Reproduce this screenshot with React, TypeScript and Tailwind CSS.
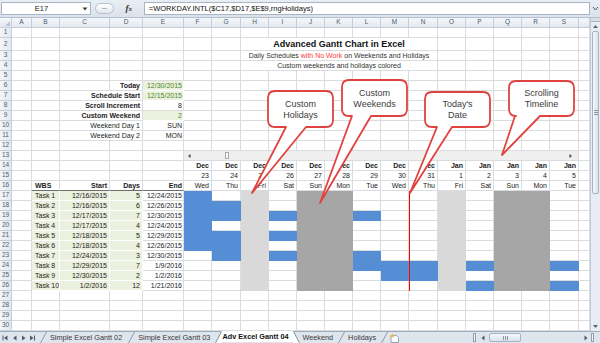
import React from "react";

type G = { c: string; m: string; d: string; w: string; t: "" | "hol" | "wk" };

const W: Record<string, string> = {
  A: "w-[20px]",
  B: "w-[28px]",
  C: "w-[50px]",
  D: "w-[33px]",
  E: "w-[41px]",
  F: "w-[28px]",
  G: "w-[29px]",
  H: "w-[28px]",
  I: "w-[28px]",
  J: "w-[28px]",
  K: "w-[28px]",
  L: "w-[28px]",
  M: "w-[28px]",
  N: "w-[29px]",
  O: "w-[28px]",
  P: "w-[28px]",
  Q: "w-[28px]",
  R: "w-[28px]",
  S: "w-[29px]",
  T: "w-[11px]",
};
const LETTERS = Object.keys(W);

const GANTT: G[] = [
  { c: "F", m: "Dec", d: "23", w: "Wed", t: "" },
  { c: "G", m: "Dec", d: "24", w: "Thu", t: "" },
  { c: "H", m: "Dec", d: "25", w: "Fri", t: "hol" },
  { c: "I", m: "Dec", d: "26", w: "Sat", t: "" },
  { c: "J", m: "Dec", d: "27", w: "Sun", t: "wk" },
  { c: "K", m: "Dec", d: "28", w: "Mon", t: "wk" },
  { c: "L", m: "Dec", d: "29", w: "Tue", t: "" },
  { c: "M", m: "Dec", d: "30", w: "Wed", t: "" },
  { c: "N", m: "Dec", d: "31", w: "Thu", t: "" },
  { c: "O", m: "Jan", d: "1", w: "Fri", t: "hol" },
  { c: "P", m: "Jan", d: "2", w: "Sat", t: "" },
  { c: "Q", m: "Jan", d: "3", w: "Sun", t: "wk" },
  { c: "R", m: "Jan", d: "4", w: "Mon", t: "wk" },
  { c: "S", m: "Jan", d: "5", w: "Tue", t: "" },
  { c: "T", m: "", d: "", w: "", t: "" },
];
const gByCol: Record<string, G> = Object.fromEntries(GANTT.map((g) => [g.c, g]));

const TASKS = [
  ["Task 1", "12/16/2015", "5", "12/24/2015"],
  ["Task 2", "12/16/2015", "6", "12/26/2015"],
  ["Task 3", "12/17/2015", "7", "12/30/2015"],
  ["Task 4", "12/17/2015", "4", "12/24/2015"],
  ["Task 5", "12/18/2015", "5", "12/29/2015"],
  ["Task 6", "12/18/2015", "4", "12/26/2015"],
  ["Task 7", "12/24/2015", "3", "12/30/2015"],
  ["Task 8", "12/29/2015", "7", "1/9/2016"],
  ["Task 9", "12/30/2015", "2", "1/2/2016"],
  ["Task 10", "1/2/2016", "12", "1/21/2016"],
];

// which timeline columns are blue for each task row
const BARS: Record<number, string[]> = {
  17: ["F"],
  18: ["F", "G"],
  19: ["F", "G", "I", "L"],
  20: ["F"],
  21: ["F", "G", "I"],
  22: ["F", "G"],
  23: ["G", "I", "L"],
  24: ["L", "M", "N", "P", "S"],
  25: ["M", "N"],
  26: ["P", "S"],
};

const PARAMS: Record<number, { label: string; value: string; bold: boolean; green: boolean }> = {
  6: { label: "Today", value: "12/30/2015", bold: true, green: true },
  7: { label: "Schedule Start", value: "12/15/2015", bold: true, green: true },
  8: { label: "Scroll Increment", value: "8", bold: true, green: false },
  9: { label: "Custom Weekend", value: "2", bold: true, green: true },
  10: { label: "Weekend Day 1", value: "SUN", bold: false, green: false },
  11: { label: "Weekend Day 2", value: "MON", bold: false, green: false },
};

const GRID = "border-[#dadcdd]";
const GREEN = "bg-[#ebf1de] border-white";

const TITLE: Record<number, React.ReactNode> = {
  2: <span className="font-bold text-[9px] text-[#111]">Advanced Gantt Chart in Excel</span>,
  3: (
    <span className="text-[#333]">
      Daily Schedules <span className="text-[#ff3b3b]">with No Work</span> on Weekends and Holidays
    </span>
  ),
  4: <span className="text-[#333]">Custom weekends and holidays colored</span>,
};

type Spec = { w?: string; cls?: string; content?: React.ReactNode } | null;

function TimelineScroll() {
  return (
    <div className="w-full h-full flex items-center bg-[#efefef]">
      <svg width="7" height="6" className="ml-[2px]">
        <path d="M4.5 1 L2 3 L4.5 5Z" fill="#444" />
      </svg>
      <div className="ml-[32px] w-[4px] h-[7px] bg-[#fbfbfb] border border-[#a9a9a9]" />
      <div className="flex-1" />
      <svg width="7" height="6" className="mr-[4px]">
        <path d="M2.5 1 L5 3 L2.5 5Z" fill="#444" />
      </svg>
    </div>
  );
}

function cellSpec(r: number, c: string): Spec {
  if (r >= 2 && r <= 4) {
    if (["I", "J", "K", "L", "M", "N"].includes(c)) return null;
    if (c === "H") return { w: "w-[197px]", cls: `${GRID} justify-center`, content: TITLE[r] };
  }
  if (r >= 6 && r <= 11) {
    const p = PARAMS[r];
    if (r >= 7 && c === "D") return null;
    if ((r >= 7 && c === "C") || (r === 6 && c === "D"))
      return {
        w: r >= 7 ? "w-[83px]" : undefined,
        cls: `${GRID} justify-end pr-[2px] ${p.bold ? "font-bold" : ""}`,
        content: p.label,
      };
    if (c === "E")
      return {
        cls: `justify-end pr-[1px] ${p.green ? `${GREEN} text-[#4e8a2e]` : GRID}`,
        content: p.value,
      };
  }
  if (r === 13) {
    if (["G", "H", "I", "J", "K", "L", "M", "N", "O", "P", "Q", "R", "S"].includes(c)) return null;
    if (c === "F") return { w: "w-[395px]", cls: GRID, content: <TimelineScroll /> };
  }
  const g = gByCol[c];
  if (g && r >= 14 && r <= 16) {
    const txt = r === 14 ? g.m : r === 15 ? g.d : g.w;
    return { cls: `${GRID} justify-end pr-[2px] ${r === 14 ? "font-bold" : ""}`, content: txt };
  }
  if (r === 16) {
    const line = "border-r-[#dadcdd] border-b-[#6f6f6f] font-bold";
    if (c === "B") return { cls: `${line} pl-[3px]`, content: "WBS" };
    if (c === "C") return { cls: `${line} justify-end pr-[2px]`, content: "Start" };
    if (c === "D") return { cls: `${line} justify-end pr-[2px]`, content: "Days" };
    if (c === "E") return { cls: `${line} justify-end pr-[1px]`, content: "End" };
  }
  if (r >= 17 && r <= 26) {
    const t = TASKS[r - 17];
    if (c === "B") return { cls: `${GREEN} pl-[3px]`, content: t[0] };
    if (c === "C") return { cls: `${GREEN} justify-end pr-[2px]`, content: t[1] };
    if (c === "D") return { cls: `${GREEN} justify-end pr-[2px]`, content: t[2] };
    if (c === "E") return { cls: `${GRID} justify-end pr-[1px]`, content: t[3] };
    if (g) {
      if (g.t === "hol") return { cls: "bg-[#d9d9d9] border-[#d9d9d9]" };
      if (g.t === "wk") return { cls: "bg-[#a6a6a6] border-[#a6a6a6]" };
      if (BARS[r].includes(c)) return { cls: "bg-[#558ed5] border-[#558ed5]" };
    }
  }
  return { cls: GRID };
}

function Row({ r }: { r: number }) {
  const cells: React.ReactNode[] = [];
  for (const c of LETTERS) {
    const s = cellSpec(r, c);
    if (!s) continue;
    cells.push(
      <div
        key={c}
        className={`shrink-0 h-full flex items-center overflow-hidden whitespace-nowrap border-r border-b ${s.w ?? W[c]} ${s.cls ?? GRID}`}
      >
        {s.content}
      </div>
    );
  }
  return (
    <div className={`flex shrink-0 ${r === 2 ? "h-[13px]" : "h-[10px]"}`}>
      <div className="w-[12px] shrink-0 h-full flex items-center justify-center bg-linear-to-r from-[#f3f6f9] to-[#e4e9ef] border-r border-b border-[#c5cfdb] text-[6.5px] text-[#4f5f70]">
        {r}
      </div>
      {cells}
    </div>
  );
}

function HeaderRow() {
  return (
    <div className="flex h-[10px] shrink-0">
      <div className="w-[12px] shrink-0 h-full flex items-end justify-end pr-[1px] pb-[1px] bg-linear-to-b from-[#f5f7fa] to-[#e3e8ee] border-r border-b border-[#c5cfdb]">
        <svg width="5" height="5">
          <path d="M5 0 L5 5 L0 5Z" fill="#b9c4d1" />
        </svg>
      </div>
      {LETTERS.map((c) => (
        <div
          key={c}
          className={`${W[c]} shrink-0 h-full flex items-center justify-center bg-linear-to-b from-[#f5f7fa] to-[#e3e8ee] border-r border-b border-[#c5cfdb] text-[6.5px] text-[#4a5b6e]`}
        >
          {c === "T" ? "" : c}
        </div>
      ))}
    </div>
  );
}

function FormulaBar() {
  return (
    <div className="h-[18px] flex items-center bg-linear-to-b from-[#e9eef4] to-[#dbe2ea] border-b border-[#b3c0cf]">
      <div className="ml-[1px] w-[90px] h-[13px] bg-white border border-[#a7b5c6] flex items-center">
        <span className="flex-1 text-center text-[7.5px] text-[#222]">E17</span>
        <svg width="8" height="6" className="mr-[1px]">
          <path d="M1.5 1.5 L6.5 1.5 L4 4.5Z" fill="#3d3d3d" />
        </svg>
      </div>
      <div className="ml-[4px] w-[19px] h-[11px] rounded-full border border-[#b4c0cd] bg-linear-to-b from-white to-[#e2e8ef] flex items-center justify-center">
        <div className="w-[5px] h-px bg-[#aab6c3]" />
      </div>
      <div className="w-[30px] flex items-center justify-center">
        <span className="font-['Liberation_Serif',serif] italic font-bold text-[9px] text-[#333]">
          f<span className="text-[7px]">x</span>
        </span>
      </div>
      <div className="w-[447px] h-[13px] bg-white border border-[#a7b5c6] flex items-center pl-[4px] text-[7.5px] text-[#111] whitespace-nowrap overflow-hidden">
        =WORKDAY.INTL($C17,$D17,$E$9,rngHolidays)
      </div>
      <div className="w-[10px] h-[13px] flex items-center justify-center">
        <svg width="7" height="5">
          <path d="M1 1 L3.5 4 L6 1" stroke="#555" fill="none" />
        </svg>
      </div>
    </div>
  );
}

function VScroll() {
  return (
    <div className="w-[10px] shrink-0 h-full flex flex-col bg-[#e8edf3] border-l border-[#c3ccd7]">
      <div className="h-[4px] bg-[#d6dee8] border-b border-[#a8b6c6]" />
      <div className="h-[9px] flex items-center justify-center">
        <svg width="5" height="3">
          <path d="M0 3 L2.5 0 L5 3Z" fill="#56677a" />
        </svg>
      </div>
      <div className="mx-[1px] h-[163px] rounded-[2px] border border-[#a3b3c5] bg-linear-to-r from-[#f6f8fb] to-[#d9e1eb] flex flex-col items-center justify-center gap-px">
        <div className="w-[4px] h-px bg-[#8797a9]" />
        <div className="w-[4px] h-px bg-[#8797a9]" />
        <div className="w-[4px] h-px bg-[#8797a9]" />
      </div>
      <div className="flex-1" />
      <div className="h-[9px] flex items-center justify-center">
        <svg width="5" height="3">
          <path d="M0 0 L2.5 3 L5 0Z" fill="#56677a" />
        </svg>
      </div>
    </div>
  );
}

function Slash() {
  return (
    <svg width="7" height="11" className="shrink-0">
      <path d="M0.5 11 L6.5 0" stroke="#8c9aab" fill="none" />
    </svg>
  );
}

function Tab({ label, pr = "pr-[6px]" }: { label: string; pr?: string }) {
  return (
    <div className="flex items-center h-full shrink-0">
      <Slash />
      <span className={`pl-[3px] ${pr} whitespace-nowrap`}>{label}</span>
    </div>
  );
}

function TabBar() {
  return (
    <div className="h-[12px] flex bg-[#dfe5ed] border-t border-[#9dabbb] text-[7.3px] text-[#3a3a3a] leading-none">
      <div className="w-[40px] shrink-0 flex items-center">
        <svg width="40" height="8">
          <path d="M3 1.5 L3 6.5" stroke="#4d5c6d" />
          <path d="M7.5 1.5 L4 4 L7.5 6.5Z" fill="#4d5c6d" />
          <path d="M16.5 1.5 L13 4 L16.5 6.5Z" fill="#4d5c6d" />
          <path d="M22 1.5 L25.5 4 L22 6.5Z" fill="#4d5c6d" />
          <path d="M30 1.5 L33.5 4 L30 6.5Z" fill="#4d5c6d" />
          <path d="M34.5 1.5 L34.5 6.5" stroke="#4d5c6d" />
        </svg>
      </div>
      <Tab label="Simple Excel Gantt 02" />
      <Tab label="Simple Excel Gantt 03" pr="pr-[5px]" />
      <div className="flex items-stretch h-full shrink-0 -mt-px">
        <svg width="7" height="12" className="shrink-0">
          <path d="M0 12 L6.5 0 L7 0 L7 12Z" fill="#fff" />
          <path d="M0.5 12 L6.5 0.5" stroke="#7e8fa3" fill="none" />
        </svg>
        <span className="bg-white w-[71px] flex items-center font-bold text-[#111] whitespace-nowrap">
          Adv Excel Gantt 04
        </span>
        <svg width="7" height="12" className="shrink-0">
          <path d="M0 0 L0.5 0 L7 12 L0 12Z" fill="#fff" />
          <path d="M0.5 0.5 L6.5 12" stroke="#7e8fa3" fill="none" />
        </svg>
      </div>
      <span className="pl-[2px] pr-[5px] flex items-center whitespace-nowrap shrink-0">Weekend</span>
      <Tab label="Holidays" pr="pr-[5px]" />
      <div className="flex items-center h-full shrink-0">
        <Slash />
        <svg width="12" height="10" className="ml-[1px]">
          <path d="M2 2.5 L7.5 2.5 L9.5 4.5 L9.5 9.5 L2 9.5Z" fill="#fff" stroke="#8092a6" strokeWidth="0.8" />
          <path d="M3.5 0.5 L4.2 2 L5.8 2.2 L4.6 3.2 L5 4.8 L3.5 4 L2 4.8 L2.4 3.2 L1.2 2.2 L2.8 2Z" fill="#f2b233" />
        </svg>
      </div>
      <div className="flex-1" />
      <div className="w-[127px] shrink-0 flex items-center">
        <div className="w-[3px] h-[9px] border border-[#8e9db0] bg-[#f2f5f8]" />
        <svg width="8" height="6" className="ml-[3px]">
          <path d="M5.5 0.5 L2.5 3 L5.5 5.5Z" fill="#4d5c6d" />
        </svg>
        <div className="ml-[2px] w-[32px] h-[9px] rounded-[2px] border border-[#a3b3c5] bg-linear-to-b from-[#f6f8fb] to-[#d9e1eb] flex items-center justify-center gap-px">
          <div className="w-px h-[4px] bg-[#8797a9]" />
          <div className="w-px h-[4px] bg-[#8797a9]" />
          <div className="w-px h-[4px] bg-[#8797a9]" />
        </div>
        <div className="flex-1" />
        <svg width="8" height="6">
          <path d="M2.5 0.5 L5.5 3 L2.5 5.5Z" fill="#4d5c6d" />
        </svg>
        <div className="ml-[1px] mr-[6px] w-[3px] h-[9px] border border-[#8e9db0] bg-[#f2f5f8]" />
      </div>
    </div>
  );
}

const CALLOUTS = [
  { x1: 268, y1: 91, x2: 333, y2: 127, bl: 286, br: 306, tx: 252, ty: 193, l1: "Custom", l2: "Holidays" },
  { x1: 342, y1: 80, x2: 407, y2: 116, bl: 352, br: 371, tx: 320, ty: 203, l1: "Custom", l2: "Weekends" },
  { x1: 425, y1: 92, x2: 490, y2: 127, bl: 437, br: 452, tx: 410, ty: 193, l1: "Today's", l2: "Date" },
  { x1: 509, y1: 81, x2: 574, y2: 116, bl: 515, br: 540, tx: 502, ty: 155, l1: "Scrolling", l2: "Timeline" },
];

function Overlay() {
  const rr = 7;
  return (
    <svg width="600" height="343" className="absolute inset-0 pointer-events-none">
      <rect x="409" y="191" width="1" height="100" fill="#ff0000" shapeRendering="crispEdges" />
      {CALLOUTS.map((k, i) => {
        const d = `M${k.x1 + rr} ${k.y1} H${k.x2 - rr} Q${k.x2} ${k.y1} ${k.x2} ${k.y1 + rr} V${k.y2 - rr} Q${k.x2} ${k.y2} ${k.x2 - rr} ${k.y2} H${k.br} L${k.tx} ${k.ty} L${k.bl} ${k.y2} H${k.x1 + rr} Q${k.x1} ${k.y2} ${k.x1} ${k.y2 - rr} V${k.y1 + rr} Q${k.x1} ${k.y1} ${k.x1 + rr} ${k.y1} Z`;
        const cx = (k.x1 + k.x2) / 2;
        const cy = (k.y1 + k.y2) / 2;
        return (
          <g key={i}>
            <path d={d} fill="#fff" stroke="#e0433f" strokeWidth="1.8" strokeLinejoin="round" />
            <text
              x={cx}
              textAnchor="middle"
              fontFamily="Liberation Sans, Arial, sans-serif"
              fontSize="9"
              fill="#3c3c3c"
            >
              <tspan x={cx} y={cy - 2.5}>
                {k.l1}
              </tspan>
              <tspan x={cx} y={cy + 8.5}>
                {k.l2}
              </tspan>
            </text>
          </g>
        );
      })}
    </svg>
  );
}

const ROWS = Array.from({ length: 30 }, (_, i) => i + 1);

export default function App() {
  return (
    <div className="relative w-[600px] h-[343px] overflow-hidden bg-white font-['Liberation_Sans',Arial,sans-serif] text-[7px] leading-none text-[#1c1c1c]">
      <FormulaBar />
      <div className="flex h-[313px]">
        <div className="w-[590px] shrink-0 flex flex-col">
          <HeaderRow />
          {ROWS.map((r) => (
            <Row key={r} r={r} />
          ))}
        </div>
        <VScroll />
      </div>
      <TabBar />
      <Overlay />
    </div>
  );
}
